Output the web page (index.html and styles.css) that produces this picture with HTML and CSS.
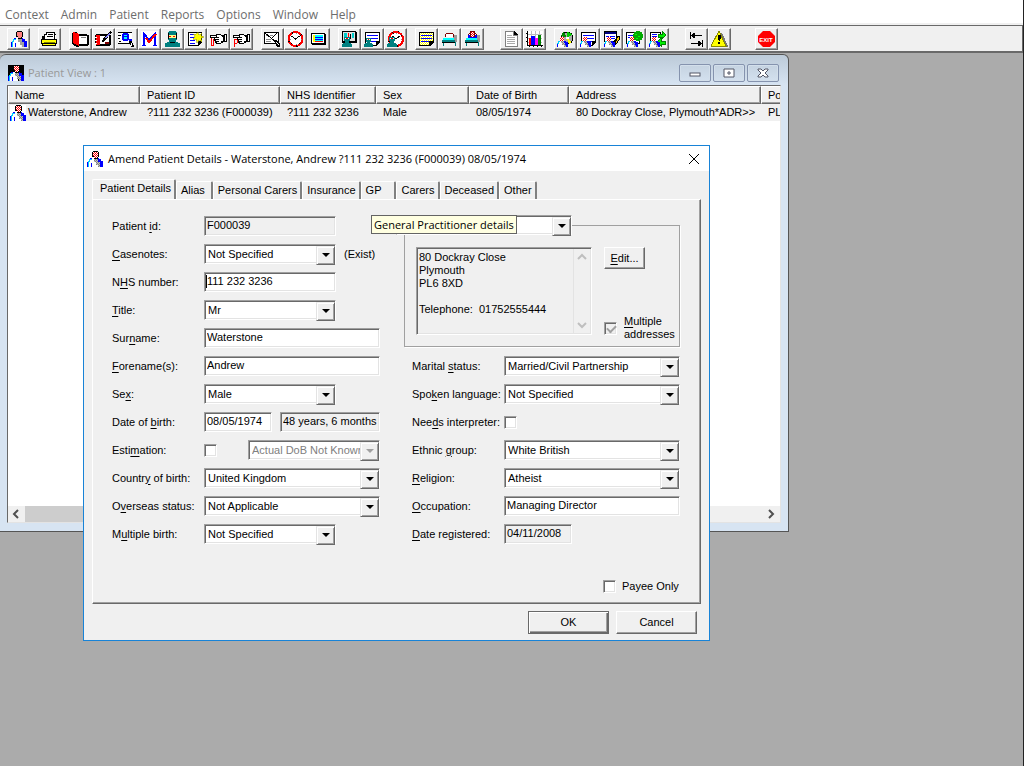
FILE: index.html
```html
<!DOCTYPE html>
<html lang="en">

<head>
    <meta charset="UTF-8">
    <title>Amend Patient Details</title>
    <link rel="stylesheet" href="styles.css">
</head>

<body>
<!-- icon set -->
<svg class="sprite" aria-hidden="true">
    <defs>
        <pattern id="p-face" width="2" height="2" patternUnits="userSpaceOnUse">
            <rect width="2" height="2" fill="#fff"/>
            <path d="M0 0h1v1H0zM1 1h1v1H1z" fill="#f00"/>
        </pattern>
        <pattern id="p-yellow" width="2" height="2" patternUnits="userSpaceOnUse">
            <rect width="2" height="2" fill="#ff0"/>
            <path d="M0 0h1v1H0zM1 1h1v1H1z" fill="#fff"/>
        </pattern>
        <pattern id="p-grey" width="2" height="2" patternUnits="userSpaceOnUse">
            <rect width="2" height="2" fill="#c0c0c0"/>
            <path d="M0 0h1v1H0zM1 1h1v1H1z" fill="#808080"/>
        </pattern>
    </defs>
    <symbol id="i-patient" viewBox="0 0 16 16">
        <path d="M3 7h4l3 4v5H2v-6z" fill="#fff"/>
        <path d="M2 8h3v1H3v2H2v5H1v-5H0v5H1v-6h1z" fill="#0cf"/>
        <path d="M0 11h1v5H0zM4 12h1v4H4zM3 7h2v1H3zM10 7h2v1h2v2h2v6h-4v-5h-2z" fill="#00f"/>
        <path d="M7 6h2v2h2v3h2v5h-2v-2H9v-3H7z" fill="url(#p-grey)"/>
        <path d="M6 0h5v1h1v5h-1v2H7V6H5V1h1z" fill="#000"/>
        <path d="M6 1h5v5h-1v1H7V5H6z" fill="url(#p-face)"/>
        <path d="M6 0h5v1H6z"/>
    </symbol>
    <symbol id="i-mini" viewBox="0 0 11 10">
        <path d="M3 0h4v4H3z" fill="url(#p-face)"/>
        <path d="M1 4h3l4 4v2H1z" fill="#fff"/>
        <path d="M1 4h2v1H2v2H1v3H0V6h1z" fill="#0cf"/>
        <path d="M0 7h1v3H0zM7 4h2v1h2v5H8V8H7z" fill="#00f"/>
        <path d="M4 4h3v2h1v2h1v2H7V8H5V6H4z" fill="url(#p-grey)"/>
    </symbol>
    <symbol id="i-teal" viewBox="0 0 9 9">
        <path d="M2 0h5v4H6v1h2v1h1v3H0V6h1V5h2V4H2z" fill="#008080"/>
        <path d="M3 1h3v1H3z" fill="#fff"/>
        <path d="M4 1h1v1H4z" fill="#f00"/>
    </symbol>
    <symbol id="i-print" viewBox="0 0 17 16">
        <path d="M5 1h9v2h1v8H1V5h2V3h2z"/>
        <path d="M6 2h7v6H4V4h2zM14 4h1v5h-1z" fill="#fff"/>
        <path d="M7 3h5v1H7zM6 5h6v1H6z"/>
        <path d="M0 8h16v5h-1v2H1v-2H0z"/>
        <path d="M1 9h14v3H1zM2 13h12v1H2z" fill="#ff0"/>
        <path d="M3 11h11v1H3z" fill="#808000"/>
    </symbol>
    <symbol id="i-book" viewBox="0 0 17 16">
        <path d="M1 1h4v2h10v1h2v10h-1v1H7v1H5l-5-3V2h1z"/>
        <path d="M6 5h9v8H6z" fill="#fff"/>
        <path d="M1 1l6 2v12l-6-3z" fill="#f00"/>
        <path d="M9 6h5v1H9z" fill="#808080"/>
    </symbol>
    <symbol id="i-bookpen" viewBox="0 0 17 16">
        <path d="M1 3h13v1h2v10h-1v1H1v-2H0V4h1z"/>
        <path d="M5 5h9v8H5z" fill="#fff"/>
        <path d="M1 4h4v10H1z" fill="#f00"/>
        <path d="M0 6h2v1H0zM0 9h2v1H0zM0 12h2v1H0z" fill="#fff"/>
        <path d="M15 0l2 1-7 9-3 1 1-3z"/>
        <path d="M14 2l1 1-4 5-1-1z" fill="#88f"/>
        <path d="M10 11h4v2h-4z" fill="#800000"/>
    </symbol>
    <symbol id="i-find" viewBox="0 0 17 16">
        <path d="M0 1h14v12H0z" fill="#fff"/>
        <path d="M0 1h14v1H0zM0 4h3v1H0zM0 7h2v1H0zM1 10h2v1H1zM0 12h12v1H0z"/>
        <path d="M4 3h1V2h5v1h1v5h3v2h-3V9h-1v1H5V9H4z" fill="#00f"/>
        <path d="M6 4h3v1H6zM6 6h3v2H6z" fill="#0ff"/>
        <path d="M11 10h3v2h1v2h1v2h-3v-2h-1z"/>
        <path d="M13 12h1v3h-1z" fill="#fff"/>
    </symbol>
    <symbol id="i-m" viewBox="0 0 17 16">
        <path d="M0 0h17v16H0z" fill="#fff"/>
        <path d="M3 15V3l5 6 6-6v12" fill="none" stroke="#00f" stroke-width="2"/>
        <path d="M1 14h4v1H1zM12 14h4v1h-4z" fill="#00f"/>
        <path d="M5 7l3 4 7-8" fill="none" stroke="#f00" stroke-width="2"/>
    </symbol>
    <symbol id="i-surgeon" viewBox="0 0 17 16">
        <path d="M5 0h7v1h1v8h-1v2h2v1h2v4H1v-4h2v-1h2V9H4V1h1z" fill="#008080"/>
        <path d="M5 4h7v3H5z" fill="#ff8"/>
        <path d="M5 5h2v1H5zM9 5h2v1H9z" fill="#f00"/>
        <path d="M4 2h1v6H4zM12 2h1v6h-1zM6 11h5v1H6z"/>
    </symbol>
    <symbol id="i-note" viewBox="0 0 17 16">
        <path d="M1 1h14v10l-4 4H1z"/>
        <path d="M2 2h12v8h-3v4H2z" fill="#fff"/>
        <path d="M3 3h4v1H3zM3 6h4v1H3zM3 9h5v1H3zM3 12h5v1H3z" fill="#00f"/>
        <path d="M11 1l1 3 3-2-1 3 3 1-3 1 1 4-3-2-2 3-1-4-3 0 2-3-2-2 3 0z" fill="#ff0" stroke="#880" stroke-width=".5"/>
    </symbol>
    <symbol id="i-hand" viewBox="0 0 17 16">
        <path d="M0 4h6V3h5v1h3V3h3v8h-4v1h-2v1H6v-1H5v-2H4V7H0z"/>
        <path d="M1 5h5v1H1zM7 4h4v1h1v1h1v4h-2v2H7v-1h2v-1H6V9h3V8H5V7h4V6H7z" fill="#fff"/>
        <path d="M15 4h1v6h-1z" fill="#fff"/>
    </symbol>
    <symbol id="i-loop" viewBox="0 0 17 16">
        <use href="#i-hand" width="17" height="16"/>
        <path d="M1 7h1v7h2v1H1zM3 8h1v6H3z" fill="#f00"/>
    </symbol>
    <symbol id="i-flag" viewBox="0 0 17 16">
        <use href="#i-hand" width="17" height="16"/>
        <path d="M1 8h3v1h1v3H4v1H2v3H1zM2 9v3h2V9z" fill="#f00"/>
    </symbol>
    <symbol id="i-letter" viewBox="0 0 17 16">
        <path d="M0 1h15v12H0z"/>
        <path d="M1 2h13v10H1z" fill="#fff"/>
        <path d="M2 4h3v1H2zM6 4h3v1H6zM2 8h5v1H2zM2 10h5v1H2z" fill="#888"/>
        <path d="M1 2l12 10M13 2L7 8" stroke="#000" fill="none"/>
        <path d="M10 9h3l3 4v3h-3z"/>
        <path d="M12 11h1l2 3h-1z" fill="#fff"/>
    </symbol>
    <symbol id="i-clock" viewBox="0 0 16 16">
        <circle cx="8" cy="8" r="7" fill="#fff" stroke="#000" stroke-width="2"/>
        <circle cx="8" cy="8" r="7" fill="none" stroke="#f00" stroke-width="2" stroke-dasharray="9 1"/>
        <path d="M4 5l4 3 4-3" fill="none" stroke="#000"/>
        <path d="M8 2h1v1H8zM8 13h1v1H8zM2 8h1v1H2zM13 8h1v1h-1z" fill="#888"/>
    </symbol>
    <symbol id="i-screen" viewBox="0 0 17 16">
        <path d="M1 2h14v1h1v11H2v-1H1z"/>
        <path d="M2 3h12v9H2z" fill="#fff"/>
        <path d="M4 4h9v7H4z" fill="#0ff"/>
        <path d="M4 6h9v1H4zM4 8h9v1H4z" fill="#00f"/>
        <path d="M4 10h9v1H4z" fill="#f00"/>
        <path d="M3 4h2v7H3z" fill="#ff0"/>
    </symbol>
    <symbol id="i-screenp" viewBox="0 0 17 16">
        <path d="M1 0h14v1h1v11H1z"/>
        <path d="M2 1h12v9H2z" fill="#e0e0e0"/>
        <path d="M3 2h3v4H3zM11 2h2v5h-2z" fill="#0cc"/>
        <path d="M7 2h1v6H7z" fill="#f00"/>
        <path d="M9 3h1v5H9z"/>
        <use href="#i-teal" x="1" y="6" width="10" height="10"/>
    </symbol>
    <symbol id="i-page" viewBox="0 0 17 16">
        <path d="M1 1h15v10l-4 4H1z"/>
        <path d="M2 2h13v8h-3v4H2z" fill="#fff"/>
        <path d="M3 4h11v1H3zM3 7h11v1H3zM3 10h9v1H3z" fill="#00f"/>
    </symbol>
    <symbol id="i-pagep" viewBox="0 0 17 16">
        <use href="#i-page" width="17" height="16"/>
        <use href="#i-teal" x="0" y="7" width="9" height="9"/>
    </symbol>
    <symbol id="i-clockp" viewBox="0 0 17 16">
        <use href="#i-clock" x="1" width="16" height="16"/>
        <use href="#i-teal" x="0" y="6" width="10" height="10"/>
    </symbol>
    <symbol id="i-memo" viewBox="0 0 17 16">
        <path d="M1 1h15v10l-4 4H1z"/>
        <path d="M2 2h13v8h-4v4H2z" fill="url(#p-yellow)"/>
        <path d="M3 4h11v1H3zM3 7h11v1H3zM3 10h8v1H3z" fill="#00f"/>
    </symbol>
    <symbol id="i-bed" viewBox="0 0 17 16">
        <path d="M12 4h4v7h-3V7h-1z" fill="#999"/>
        <path d="M5 2h7v1H5zM4 3h1v3H4zM12 3h1v3h-1z" fill="#800000"/>
        <path d="M5 3h7v3H5z" fill="#fff"/>
        <path d="M2 7h11v2H2z" fill="#0ff"/>
        <path d="M1 9h13v2h1v4h-1v-3H3v3H2v-3H1z" fill="#008080"/>
        <path d="M1 11h13v1H1z"/>
    </symbol>
    <symbol id="i-bedp" viewBox="0 0 17 16">
        <use href="#i-bed" width="17" height="16"/>
        <path d="M4 4h9v3H4z" fill="#00f"/>
        <path d="M6 0h5v6H6z" fill="#800000"/>
        <path d="M7 1h3v5H7z" fill="url(#p-face)"/>
    </symbol>
    <symbol id="i-doc" viewBox="0 0 17 16">
        <path d="M2 0h9l4 4v12H2z" fill="#808080"/>
        <path d="M3 1h7v4h4v10H3z" fill="#fff"/>
        <path d="M4 4h5v1H4zM4 6h8v1H4zM4 8h8v1H4zM4 10h8v1H4zM4 12h8v1H4z" fill="#aaa"/>
        <path d="M11 0l4 4h-4z" fill="#000"/>
    </symbol>
    <symbol id="i-bars" viewBox="0 0 17 16">
        <path d="M0 0h17v16H0z" fill="#fff"/>
        <path d="M1 3h15v1H1zM1 7h15v1H1zM1 11h15v1H1zM5 0h1v15H5zM9 0h1v15H9zM13 0h1v15h-1z" fill="#bbb"/>
        <path d="M1 0h1v14h15v1h-1v1h-1v-1h-3v1h-1v-1H8v1H7v-1H4v1H3v-1H1V11H0v-1h1V7H0V6h1V3H0V2h1z"/>
        <path d="M3 7h2v7H3z" fill="#f00"/>
        <path d="M5 5h4v9H5z" fill="#00f"/>
        <path d="M9 7h3v7H9z" fill="#f0f"/>
        <path d="M12 4h3v10h-3z" fill="#008000"/>
    </symbol>
    <symbol id="i-disc" viewBox="0 0 17 16">
        <circle cx="10" cy="7" r="6" fill="#aaa" stroke="#000"/>
        <path d="M10 7V1a6 6 0 0 1 5 3z" fill="#0c0"/>
        <path d="M10 7l-6-2a6 6 0 0 1 3-4z" fill="#080"/>
        <path d="M10 7l5 4-3 2z" fill="#ff0"/>
        <path d="M9 6h3v2H9z" fill="#fff"/>
        <use href="#i-mini" x="0" y="6" width="11" height="10"/>
    </symbol>
    <symbol id="i-pagem" viewBox="0 0 17 16">
        <use href="#i-page" width="17" height="16"/>
        <use href="#i-mini" x="0" y="6" width="11" height="10"/>
    </symbol>
    <symbol id="i-write" viewBox="0 0 17 16">
        <path d="M1 0h13v11H1z"/>
        <path d="M2 3h11v7H2z" fill="#fff"/>
        <path d="M2 1h11v2H2z" fill="#000080"/>
        <path d="M3 5h3v1H3zM7 5h5v1H7zM7 7h5v1H7z" fill="#00f"/>
        <path d="M14 5h3v3l-4 6h-3v-2z"/>
        <path d="M15 6h1v2l-3 5v-2z" fill="#fc0"/>
        <use href="#i-mini" x="1" y="6" width="11" height="10"/>
    </symbol>
    <symbol id="i-globe" viewBox="0 0 17 16">
        <path d="M0 1h14v12H0z"/>
        <path d="M1 2h12v10H1z" fill="#fff"/>
        <path d="M2 4h6v1H2zM2 6h6v1H2z" fill="#00f"/>
        <circle cx="12" cy="5" r="5" fill="#0a0"/>
        <path d="M9 3h2v1H9zM12 5h2v1h-2zM10 7h2v1h-2z" fill="#0f0"/>
        <use href="#i-mini" x="1" y="6" width="11" height="10"/>
    </symbol>
    <symbol id="i-swap" viewBox="0 0 17 16">
        <path d="M1 1h11v12H1z"/>
        <path d="M2 2h9v10H2z" fill="#fff"/>
        <path d="M3 3h5v1H3zM3 5h5v1H3z" fill="#00f"/>
        <path d="M9 3h4V0l4 4-4 4V6H9zM16 10h-4V7l-4 4 4 4v-2h4z" fill="#0e0" stroke="#008000"/>
        <use href="#i-mini" x="0" y="6" width="11" height="10"/>
    </symbol>
    <symbol id="i-tab" viewBox="0 0 17 16">
        <path d="M2 1h1v7H2zM3 4h11v1H3zM4 3h2v3H4zM5 2h2v5H5zM14 9h1v7h-1zM3 12h11v1H3zM11 11h2v3h-2zM10 10h2v5h-2z"/>
    </symbol>
    <symbol id="i-warn" viewBox="0 0 17 16">
        <path d="M9 2h2l6 13-1 1H3v-2z" fill="#777"/>
        <path d="M8 0L0 15h15z" fill="#ff0" stroke="#880" stroke-width="1"/>
        <path d="M7 4h3v3L9 10H8L7 7zM7 11h2v2H7z"/>
    </symbol>
</svg>

<header class="app-bar">
    <nav class="menu">
        <a href="#">Context</a>
        <a href="#">Admin</a>
        <a href="#">Patient</a>
        <a href="#">Reports</a>
        <a href="#">Options</a>
        <a href="#">Window</a>
        <a href="#">Help</a>
    </nav>
    <div class="toolbar">
        <div class="tools">
            <button aria-label="Patient"><svg><use href="#i-patient"/></svg></button>
        </div>
        <div class="tools">
            <button aria-label="Print"><svg><use href="#i-print"/></svg></button>
        </div>
        <div class="tools">
            <button aria-label="Casenotes"><svg><use href="#i-book"/></svg></button>
            <button aria-label="Edit casenotes"><svg><use href="#i-bookpen"/></svg></button>
            <button aria-label="Find"><svg><use href="#i-find"/></svg></button>
            <button aria-label="Master index"><svg><use href="#i-m"/></svg></button>
            <button aria-label="Consultant"><svg><use href="#i-surgeon"/></svg></button>
            <button aria-label="New note"><svg><use href="#i-note"/></svg></button>
            <button aria-label="Referral"><svg><use href="#i-loop"/></svg></button>
            <button aria-label="Referral flag"><svg><use href="#i-flag"/></svg></button>
        </div>
        <div class="tools">
            <button aria-label="Letter"><svg><use href="#i-letter"/></svg></button>
            <button aria-label="Clock"><svg><use href="#i-clock"/></svg></button>
            <button aria-label="Screen"><svg><use href="#i-screen"/></svg></button>
        </div>
        <div class="tools">
            <button aria-label="Clinic screen"><svg><use href="#i-screenp"/></svg></button>
            <button aria-label="Clinic list"><svg><use href="#i-pagep"/></svg></button>
            <button aria-label="Clinic time"><svg><use href="#i-clockp"/></svg></button>
        </div>
        <div class="tools">
            <button aria-label="Waiting list"><svg><use href="#i-memo"/></svg></button>
            <button aria-label="Bed"><svg><use href="#i-bed"/></svg></button>
            <button aria-label="Inpatient"><svg><use href="#i-bedp"/></svg></button>
        </div>
        <div class="tools tools-far">
            <button aria-label="Document"><svg><use href="#i-doc"/></svg></button>
            <button aria-label="Chart"><svg><use href="#i-bars"/></svg></button>
        </div>
        <div class="tools">
            <button aria-label="Patient disc"><svg><use href="#i-disc"/></svg></button>
            <button aria-label="Patient list"><svg><use href="#i-pagem"/></svg></button>
            <button aria-label="Patient edit"><svg><use href="#i-write"/></svg></button>
            <button aria-label="Patient globe"><svg><use href="#i-globe"/></svg></button>
            <button aria-label="Patient swap"><svg><use href="#i-swap"/></svg></button>
        </div>
        <div class="tools tools-far">
            <button aria-label="Switch"><svg><use href="#i-tab"/></svg></button>
            <button aria-label="Warning"><svg><use href="#i-warn"/></svg></button>
        </div>
        <div class="tools tools-exit">
            <button>
                <svg viewBox="0 0 17 16">
                    <path d="M5 0h7l5 5v6l-5 5H5l-5-5V5z" fill="#f00"/>
                    <text x="8" y="11" class="exit-text">EXIT</text>
                </svg>
            </button>
        </div>
    </div>
</header>

<main class="desktop">
    <section class="view">
        <div class="view-title">
            <svg class="view-icon"><use href="#i-patient"/></svg>
            <h2>Patient View : 1</h2>
            <button aria-label="Minimise"><svg viewBox="0 0 14 10"><rect x="2" y="5" width="10" height="3"/></svg></button>
            <button aria-label="Maximise"><svg viewBox="0 0 14 10"><path d="M2 1h10v8H2zM6 4h2v2H6z"/></svg></button>
            <button aria-label="Close"><svg viewBox="0 0 14 10"><path d="M2 1h3l2 2 2-2h3v1L9 5l3 3v1H9L7 7 5 9H2V8l3-3-3-3z"/></svg></button>
        </div>
        <div class="list">
            <div class="list-body">
                <table>
                    <colgroup>
                        <col class="c-name">
                        <col class="c-id">
                        <col class="c-nhs">
                        <col class="c-sex">
                        <col class="c-dob">
                        <col class="c-address">
                        <col class="c-post">
                    </colgroup>
                    <thead>
                    <tr>
                        <th>Name</th>
                        <th>Patient ID</th>
                        <th>NHS Identifier</th>
                        <th>Sex</th>
                        <th>Date of Birth</th>
                        <th>Address</th>
                        <th>Postcode</th>
                    </tr>
                    </thead>
                    <tbody>
                    <tr>
                        <td class="name"><svg><use href="#i-patient"/></svg>Waterstone, Andrew</td>
                        <td>?111 232 3236 (F000039)</td>
                        <td>?111 232 3236</td>
                        <td>Male</td>
                        <td>08/05/1974</td>
                        <td>80 Dockray Close, Plymouth*ADR&gt;&gt;</td>
                        <td>PL6 8XD</td>
                    </tr>
                    </tbody>
                </table>
            </div>
            <div class="scroll">
                <svg viewBox="0 0 17 16"><path d="M10 4L6 8l4 4"/></svg>
                <span class="thumb"></span>
                <svg viewBox="0 0 17 16"><path d="M6 4l4 4-4 4"/></svg>
            </div>
        </div>
    </section>

    <form class="dialog" role="dialog" aria-labelledby="dialogTitle">
        <div class="dialog-title">
            <svg class="dialog-icon"><use href="#i-patient"/></svg>
            <h1 id="dialogTitle">Amend Patient Details - Waterstone, Andrew ?111 232 3236 (F000039) 08/05/1974</h1>
            <button type="button" aria-label="Close"><svg viewBox="0 0 12 12"><path d="M1 1l10 10M11 1L1 11"/></svg></button>
        </div>
        <div class="tabs" role="tablist">
            <button type="button" role="tab" class="active">Patient Details</button>
            <button type="button" role="tab" class="tab-alias">Alias</button>
            <button type="button" role="tab">Personal Carers</button>
            <button type="button" role="tab">Insurance</button>
            <button type="button" role="tab" class="tab-gp">GP</button>
            <button type="button" role="tab">Carers</button>
            <button type="button" role="tab">Deceased</button>
            <button type="button" role="tab">Other</button>
        </div>
        <div class="panel">
            <span class="tooltip" role="tooltip">General Practitioner details</span>
            <div class="columns">
                <div class="col-left">
                    <div class="row">
                        <label for="pid">Patient <u>i</u>d:</label>
                        <input type="text" id="pid" class="w-mid" value="F000039" readonly>
                    </div>
                    <div class="row">
                        <label for="casenotes"><u>C</u>asenotes:</label>
                        <span class="combo w-mid"><select id="casenotes"><option>Not Specified</option></select></span>
                        <span class="hint">(Exist)</span>
                    </div>
                    <div class="row">
                        <label for="nhs">N<u>H</u>S number:</label>
                        <input type="text" id="nhs" class="w-mid focused" value="111 232 3236">
                    </div>
                    <div class="row">
                        <label for="title"><u>T</u>itle:</label>
                        <span class="combo w-mid"><select id="title"><option>Mr</option></select></span>
                    </div>
                    <div class="row">
                        <label for="surname">Sur<u>n</u>ame:</label>
                        <input type="text" id="surname" class="w-full" value="Waterstone">
                    </div>
                    <div class="row">
                        <label for="forename"><u>F</u>orename(s):</label>
                        <input type="text" id="forename" class="w-full" value="Andrew">
                    </div>
                    <div class="row">
                        <label for="sex">Se<u>x</u>:</label>
                        <span class="combo w-mid"><select id="sex"><option>Male</option></select></span>
                    </div>
                    <div class="row">
                        <label for="dob">Date of <u>b</u>irth:</label>
                        <input type="text" id="dob" class="w-date" value="08/05/1974">
                        <input type="text" class="w-age" aria-label="Age" value="48 years, 6 months" readonly>
                    </div>
                    <div class="row">
                        <label for="estimation">Esti<u>m</u>ation:</label>
                        <input type="checkbox" id="estimation">
                        <span class="combo w-est"><select aria-label="Estimation type" disabled><option>Actual DoB Not Known</option></select></span>
                    </div>
                    <div class="row">
                        <label for="country">Countr<u>y</u> of birth:</label>
                        <span class="combo w-full"><select id="country"><option>United Kingdom</option></select></span>
                    </div>
                    <div class="row">
                        <label for="overseas">O<u>v</u>erseas status:</label>
                        <span class="combo w-full"><select id="overseas"><option>Not Applicable</option></select></span>
                    </div>
                    <div class="row">
                        <label for="multiple">M<u>u</u>ltiple birth:</label>
                        <span class="combo w-mid"><select id="multiple"><option>Not Specified</option></select></span>
                    </div>
                </div>
                <div class="col-right">
                    <fieldset>
                        <legend><span class="combo w-full"><select aria-label="Address type"><option></option></select></span></legend>
                        <div class="address">
                            <div class="memo">
                                <textarea aria-label="Address" readonly>80 Dockray Close
Plymouth
PL6 8XD

Telephone:  01752555444</textarea>
                                <span class="memo-scroll">
                                    <svg viewBox="0 0 16 16"><path d="M4 10l4-4 4 4"/></svg>
                                    <svg viewBox="0 0 16 16"><path d="M4 6l4 4 4-4"/></svg>
                                </span>
                            </div>
                            <div class="address-side">
                                <button type="button" class="btn btn-edit"><u>E</u>dit...</button>
                                <label class="check check-multi"><input type="checkbox" checked disabled><span><u>M</u>ultiple addresses</span></label>
                            </div>
                        </div>
                    </fieldset>
                    <div class="row">
                        <label for="marital">Marital <u>s</u>tatus:</label>
                        <span class="combo w-full"><select id="marital"><option>Married/Civil Partnership</option></select></span>
                    </div>
                    <div class="row">
                        <label for="language">Spo<u>k</u>en language:</label>
                        <span class="combo w-full"><select id="language"><option>Not Specified</option></select></span>
                    </div>
                    <div class="row">
                        <label for="interpreter">Nee<u>d</u>s interpreter:</label>
                        <input type="checkbox" id="interpreter">
                    </div>
                    <div class="row">
                        <label for="ethnic">Ethnic <u>g</u>roup:</label>
                        <span class="combo w-full"><select id="ethnic"><option>White British</option></select></span>
                    </div>
                    <div class="row">
                        <label for="religion"><u>R</u>eligion:</label>
                        <span class="combo w-full"><select id="religion"><option>Atheist</option></select></span>
                    </div>
                    <div class="row">
                        <label for="occupation"><u>O</u>ccupation:</label>
                        <input type="text" id="occupation" class="w-full" value="Managing Director">
                    </div>
                    <div class="row">
                        <label for="registered"><u>D</u>ate registered:</label>
                        <input type="text" id="registered" class="w-date" value="04/11/2008" readonly>
                    </div>
                </div>
            </div>
            <label class="check payee"><input type="checkbox"><span>Payee Only</span></label>
        </div>
        <div class="buttons">
            <button type="button" class="btn btn-ok">OK</button>
            <button type="button" class="btn">Cancel</button>
        </div>
    </form>
</main>
</body>
</html>
```

FILE: styles.css
```css
* {
    box-sizing: border-box;
}

body {
    margin: 0;
    min-height: 100vh;
    display: flex;
    flex-direction: column;
    background-color: #ababab;
    border-right: 1px solid #222;
    color: #000;
    font: 11px/13px "Liberation Sans", Arial, sans-serif;
}

button, input, select, textarea {
    margin: 0;
    font: inherit;
    color: inherit;
    border-radius: 0;
    outline: none;
}

button {
    padding: 0;
    border: 0;
    background: none;
}

svg {
    display: block;
    flex: none;
}

u {
    text-underline-offset: 2px;
}

.sprite {
    position: absolute;
    width: 0;
    height: 0;
}

symbol {
    shape-rendering: crispEdges;
}

.exit-text {
    font: bold 6px "Liberation Sans", Arial, sans-serif;
    fill: #fff;
    text-anchor: middle;
}

/* menu and toolbar */
.app-bar {
    background-color: #f0f0f0;
    border-bottom: 2px solid #696969;
}

.menu {
    display: flex;
    gap: 12px;
    height: 25px;
    padding: 4px 5px 0;
    background-color: #fff;
    border-bottom: 2px solid #f0f0f0;
    font: 12px/21px "Open Sans", "Noto Sans", sans-serif;
}

.menu a {
    color: #6d6d6d;
    text-decoration: none;
}

.toolbar {
    display: flex;
    gap: 8px;
    padding: 2px 7px 1px;
    border-top: 1px solid #696969;
    border-right: 1px solid #696969;
}

.tools {
    display: flex;
}

.tools-far {
    margin-left: 8px;
}

.tools-exit {
    margin-left: 16px;
}

.tools button {
    display: flex;
    justify-content: center;
    align-items: center;
    width: 23px;
    height: 22px;
    border: 1px solid;
    border-color: #fff #696969 #696969 #fff;
    box-shadow: inset -1px -1px #a0a0a0;
}

.tools svg {
    width: 17px;
    height: 16px;
}

/* patient list window */
.desktop {
    position: relative;
    flex: 1;
}

.view {
    position: absolute;
    top: 1px;
    left: 0;
    width: 789px;
    padding: 0 7px 8px;
    background-color: #d7e4f2;
    border: solid #555;
    border-width: 1px 1px 1px 0;
    border-radius: 6px 6px 0 0;
    background-image: linear-gradient(#bccad8, #d7e4f2 30px);
}

.view-title {
    display: flex;
    align-items: center;
    gap: 2px;
    height: 30px;
    padding: 5px 2px 0 0;
}

.view-icon {
    width: 16px;
    height: 16px;
    margin: 0 2px 0 1px;
    background-color: #000;
}

.view-title h2 {
    flex: 1;
    margin: 0;
    color: #999;
    font: 11px/16px "Open Sans", "Noto Sans", sans-serif;
}

.view-title button {
    display: flex;
    justify-content: center;
    align-items: center;
    width: 32px;
    height: 18px;
    border: 1px solid #8593ae;
    border-radius: 2px;
    box-shadow: inset 0 0 0 1px #d3dfeb;
}

.view-title button svg {
    width: 14px;
    height: 10px;
    fill: #fff;
    stroke: #535666;
}

.list {
    background-color: #fff;
    border: 1px solid;
    border-color: #696969 #e3e3e3 #e3e3e3 #696969;
}

.list-body {
    height: 420px;
    overflow: hidden;
}

.list table {
    width: 832px;
    table-layout: fixed;
    border-collapse: separate;
    border-spacing: 0;
}

.c-name { width: 132px; }
.c-id { width: 140px; }
.c-nhs { width: 96px; }
.c-sex { width: 93px; }
.c-dob { width: 100px; }
.c-address { width: 192px; }

.list th, .list td {
    padding: 0 0 0 6px;
    font-weight: normal;
    text-align: left;
    white-space: nowrap;
    background-color: #f0f0f0;
}

.list th {
    height: 18px;
    border: 1px solid;
    border-color: #fff #696969 #696969 #fff;
    box-shadow: inset -1px -1px #a0a0a0;
}

.list td {
    height: 17px;
    padding-left: 7px;
}

.list .name {
    display: flex;
    align-items: center;
    gap: 2px;
    padding-left: 2px;
}

.name svg {
    width: 16px;
    height: 16px;
    background-color: #fff;
}

.scroll {
    display: flex;
    height: 16px;
    background-color: #f0f0f0;
}

.scroll svg {
    width: 17px;
    height: 16px;
    fill: none;
    stroke: #505050;
    stroke-width: 2;
}

.thumb {
    width: 640px;
    margin-right: auto;
    background-color: #cdcdcd;
}

/* dialog */
.dialog {
    position: absolute;
    top: 92px;
    left: 83px;
    width: 627px;
    padding-bottom: 6px;
    background-color: #f0f0f0;
    border: 1px solid #1883d7;
}

.dialog-title {
    display: flex;
    align-items: center;
    height: 25px;
    padding: 0 9px 0 3px;
    background-color: #fff;
}

.dialog-icon {
    width: 16px;
    height: 16px;
    margin-right: 5px;
}

.dialog-title h1 {
    flex: 1;
    margin: 0;
    font: 11px/16px "Open Sans", "Noto Sans", sans-serif;
    white-space: nowrap;
}

.dialog-title button svg {
    width: 12px;
    height: 12px;
    stroke: #000;
}

.tabs {
    display: flex;
    align-items: flex-end;
    height: 28px;
    padding-left: 8px;
}

.tabs button {
    height: 18px;
    padding: 0 3px 0 4px;
    border: 1px solid #fff;
    border-right: 2px solid #808080;
    border-bottom: 0;
    border-radius: 2px 2px 0 0;
}

.tabs .active {
    height: 21px;
    margin-bottom: -1px;
    padding: 0 3px 3px 7px;
    background-color: #f0f0f0;
    position: relative;
}

.tabs .tab-alias {
    padding-right: 6px;
}

.tabs .tab-gp {
    padding-right: 13px;
}

.panel {
    position: relative;
    margin: 0 8px;
    padding: 12px 20px 10px 19px;
    border: 1px solid;
    border-color: #fff #696969 #696969 #fff;
    box-shadow: inset -1px -1px #a0a0a0;
}

.tooltip {
    position: absolute;
    top: 15px;
    left: 278px;
    z-index: 1;
    padding: 0 2px;
    border: 1px solid #646464;
    background-color: #ffffe1;
    font: 11px/17px "Open Sans", "Noto Sans", sans-serif;
    white-space: nowrap;
}

.columns {
    display: flex;
    justify-content: space-between;
}

.col-left {
    width: 268px;
}

.col-right {
    width: 276px;
}

.col-right .row {
    padding-left: 8px;
}

.row {
    display: flex;
    align-items: center;
    gap: 8px;
    height: 28px;
}

.row > label {
    width: 84px;
    white-space: nowrap;
}

.row input[type="text"] {
    height: 20px;
    padding: 0 1px 2px 2px;
}

.row input[type="text"], select, .memo {
    border: 1px solid;
    border-color: #a0a0a0 #fff #fff #a0a0a0;
    background-color: #fff;
    box-shadow: inset 1px 1px #696969, inset -1px -1px #e3e3e3;
}

.row input[type="text"]:read-only, .memo {
    background-color: #f0f0f0;
}

.row .w-mid { width: 132px; }
.row .w-full, legend .w-full { width: 176px; }
.row .w-date { width: 68px; }
.row .w-age { width: 100px; }
.row .w-est { width: 132px; margin-left: 23px; }

.row .focused {
    background-image: linear-gradient(#000, #000);
    background-position: 1px 2px;
    background-size: 1px 13px;
    background-repeat: no-repeat;
}

.combo {
    position: relative;
    display: flex;
    height: 20px;
}

select {
    appearance: none;
    width: 100%;
    height: 20px;
    padding: 0 18px 0 3px;
}

select:disabled {
    color: #808080;
    opacity: 1;
}

/* drop-down button */
.combo::before {
    content: "";
    position: absolute;
    top: 2px;
    right: 1px;
    width: 17px;
    height: 17px;
    border: 1px solid;
    border-color: #f0f0f0 #696969 #696969 #e3e3e3;
    background-color: #f0f0f0;
    box-shadow: inset 1px 1px #fff, inset -1px -1px #a0a0a0;
    pointer-events: none;
}

.combo::after {
    content: "";
    position: absolute;
    top: 9px;
    right: 6px;
    border: 4px solid transparent;
    border-top-color: #000;
    border-bottom: 0;
    pointer-events: none;
}

.w-est::after {
    border-top-color: #a0a0a0;
}

input[type="checkbox"] {
    appearance: none;
    flex: none;
    width: 13px;
    height: 13px;
    border: 1px solid;
    border-color: #a0a0a0 #fff #fff #a0a0a0;
    background-color: #fff;
    box-shadow: inset 1px 1px #696969, inset -1px -1px #e3e3e3;
}

input[type="checkbox"]:disabled {
    background-color: #f0f0f0;
}

input[type="checkbox"]:checked::before {
    content: "";
    display: block;
    width: 7px;
    height: 4px;
    margin: 2px 0 0 2px;
    border: solid #a0a0a0;
    border-width: 0 0 2px 2px;
    transform: rotate(-45deg);
}

/* address group */
fieldset {
    height: 132px;
    min-width: 0;
    margin: 3px 0 5px;
    padding: 0 0 0 11px;
    border: 1px solid #a0a0a0;
    box-shadow: 1px 1px #fff;
}

legend {
    margin-left: -20px;
    padding: 0;
}

.address {
    display: flex;
    gap: 12px;
    padding-top: 12px;
}

.memo {
    display: flex;
    flex: none;
    width: 176px;
    height: 88px;
    padding: 1px;
}

.memo textarea {
    flex: 1;
    min-width: 0;
    padding: 2px 1px;
    border: 0;
    background: none;
    resize: none;
    overflow: hidden;
    white-space: pre;
}

.memo-scroll {
    display: flex;
    flex-direction: column;
    justify-content: space-between;
    border-left: 1px solid #e3e3e3;
}

.memo-scroll svg {
    width: 16px;
    height: 16px;
    fill: none;
    stroke: #bfbfbf;
    stroke-width: 2;
}

.address-side {
    display: flex;
    flex-direction: column;
    justify-content: space-between;
    align-items: flex-start;
    height: 94px;
}

.btn {
    width: 81px;
    height: 23px;
    border: 1px solid;
    border-color: #fff #696969 #696969 #fff;
    background-color: #f0f0f0;
    box-shadow: inset -1px -1px #a0a0a0;
}

.btn-edit {
    width: 41px;
    height: 22px;
}

.btn-ok {
    border-color: #696969;
    box-shadow: inset 1px 1px #fff, inset -1px -1px #696969, inset -2px -2px #a0a0a0;
}

.check {
    display: flex;
    align-items: center;
    gap: 7px;
}

.check-multi span {
    width: 52px;
}

.payee {
    width: 77px;
    margin: 32px 0 0 auto;
    gap: 6px;
    white-space: nowrap;
}

.buttons {
    display: flex;
    justify-content: flex-end;
    gap: 7px;
    padding: 7px 12px 0;
}
```
